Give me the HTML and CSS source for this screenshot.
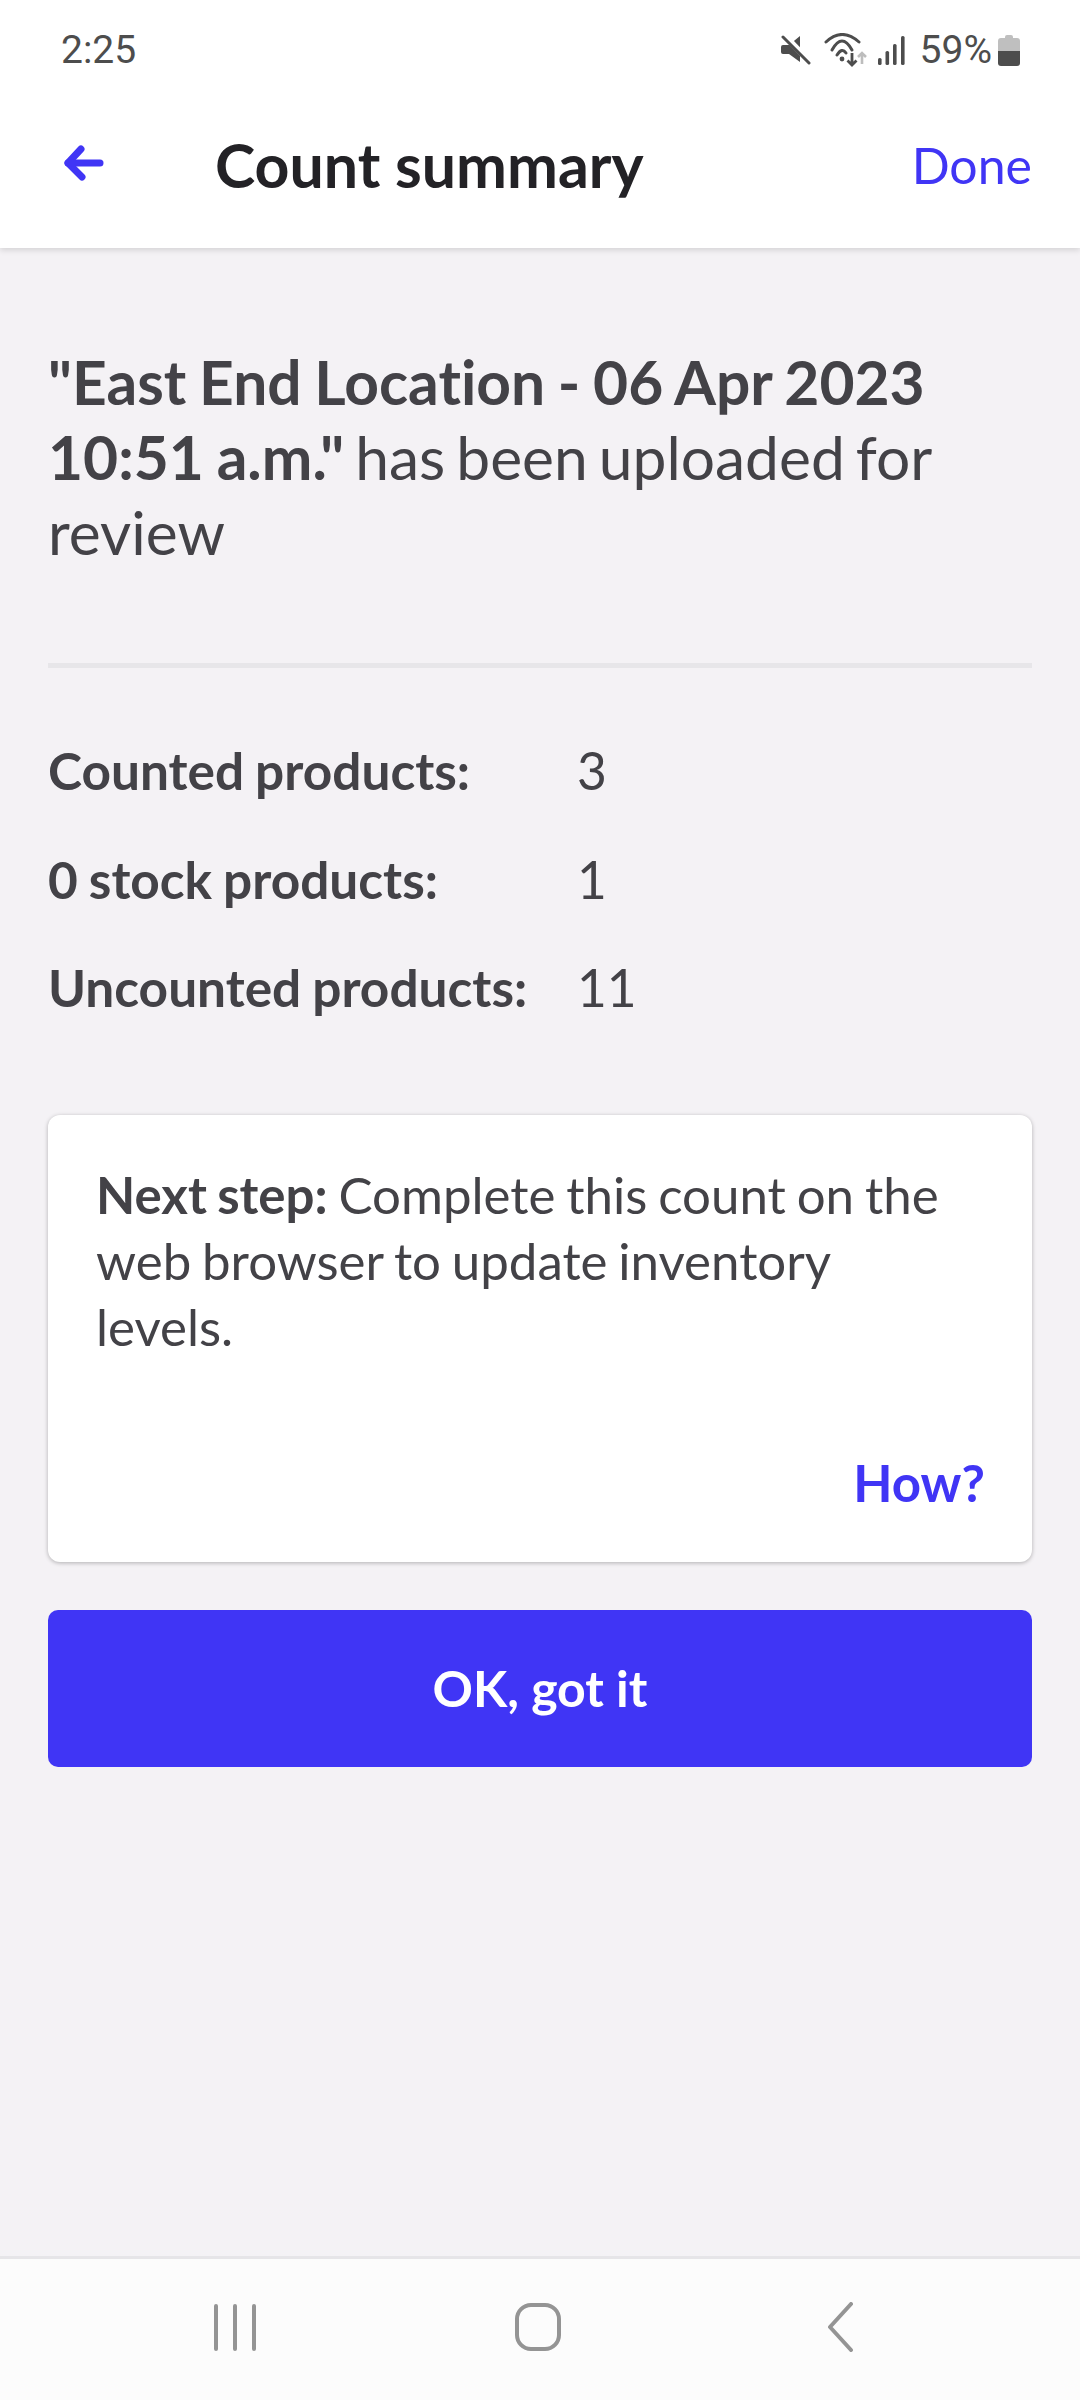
FILE: index.html
```html
<!DOCTYPE html>
<html lang="en">
<head>
<meta charset="utf-8">
<title>Count summary</title>
<link rel="stylesheet" href="styles.css">
</head>
<body>
<div class="screen">
  <header class="top">
    <div class="status">
      <span class="time">2:25</span>
      <div class="status-icons">
        <svg class="ic-mute" viewBox="0 0 30 30" width="30" height="30"><path d="M0 12q0-2 2-2h6L19 1v26l-11-8H2q-2 0-2-2z" fill="#4d4d4d"/><path d="M4 1l27 28" stroke="#fff" stroke-width="6"/><path d="M2 2l26 26" stroke="#4d4d4d" stroke-width="3" stroke-linecap="round"/></svg>
        <svg class="ic-wifi" viewBox="0 0 44 34" width="44" height="34"><g fill="none" stroke="#4d4d4d" stroke-width="3" stroke-linecap="round"><path d="M2 9Q18-6 35 9"/><path d="M8 17Q18-1 28 17"/><path d="M13 22Q18 14 22 20"/></g><circle cx="18" cy="26" r="2.4" fill="#4d4d4d"/><path d="M28 20v12M23.500 27.500l4.500 4.500 4.500-4.500" fill="none" stroke="#4d4d4d" stroke-width="2.8"/><path d="M38 31V20M34 24l4-4 4 4" fill="none" stroke="#bdbdbd" stroke-width="2.6"/></svg>
        <svg class="ic-signal" viewBox="0 0 27 29" width="27" height="29"><g fill="#4d4d4d"><rect x="0" y="22" width="3.6" height="7" rx="1.6"/><rect x="7.500" y="15" width="3.6" height="14" rx="1.6"/><rect x="15" y="8" width="3.6" height="21" rx="1.6"/><rect x="23" y="0" width="3.6" height="29" rx="1.6"/></g></svg>
        <span class="pct">59%</span>
        <svg class="ic-batt" viewBox="0 0 22 32" width="22" height="32"><path d="M7 3q0-2 2-2h4q2 0 2 2v1h4q3 0 3 3v10H0V7q0-3 3-3h4z" fill="#bfbfbf"/><path d="M0 17h22v12q0 3-3 3H3q-3 0-3-3z" fill="#4d4d4d"/></svg>
      </div>
    </div>
    <div class="appbar">
      <svg class="back" viewBox="0 0 42 40" width="42" height="40"><path d="M19 6L6 20l14 14" fill="none" stroke="#4035f5" stroke-width="7" stroke-linecap="round" stroke-linejoin="round"/><path d="M6 20h32" stroke="#4035f5" stroke-width="7" stroke-linecap="round"/></svg>
      <h1 class="title">Count summary</h1>
      <a class="done">Done</a>
    </div>
  </header>
  <main class="content">
    <p class="headline"><b>"East End Location - 06 Apr 2023 10:51 a.m."</b> has been uploaded for review</p>
    <hr class="rule">
    <dl class="stats">
      <div class="stat"><dt>Counted products:</dt><dd>3</dd></div>
      <div class="stat"><dt>0 stock products:</dt><dd>1</dd></div>
      <div class="stat"><dt>Uncounted products:</dt><dd>11</dd></div>
    </dl>
    <section class="card">
      <p class="card-text"><b>Next step:</b> Complete this count on the web browser to update inventory levels.</p>
      <a class="how">How?</a>
    </section>
    <button class="ok">OK, got it</button>
  </main>
  <nav class="navbar">
    <svg viewBox="0 0 46 48" width="46" height="48"><g stroke="#949494" stroke-width="4" stroke-linecap="round"><path d="M4 3v43M23 3v43M42 3v43"/></g></svg>
    <svg viewBox="0 0 48 50" width="48" height="50"><rect x="3" y="3" width="42" height="44" rx="14" fill="none" stroke="#949494" stroke-width="4"/></svg>
    <svg viewBox="0 0 28 50" width="28" height="50"><path d="M25 2L4 25l21 23" fill="none" stroke="#949494" stroke-width="4" stroke-linecap="round" stroke-linejoin="round"/></svg>
  </nav>
</div>
</body>
</html>
```
FILE: styles.css
```css
* { box-sizing: border-box; }
html, body { margin: 0; padding: 0; }
body { font-family: Lato, sans-serif; color: #434247; font-variant-ligatures: none; }
.screen { width: 1080px; height: 2400px; display: flex; flex-direction: column; background: #f4f2f5; }
.top { height: 248px; background: #fff; box-shadow: 0 2px 6px rgba(0,0,0,.14); position: relative; }
.status { height: 100px; display: flex; align-items: center; justify-content: space-between; padding: 0 60px 0 61px; font-family: Roboto, sans-serif; color: #4d4d4d; }
.time { font-size: 39px; }
.status-icons { display: flex; align-items: center; }
.ic-mute { margin-right: 13px; }
.ic-wifi { margin-right: 10px; }
.ic-signal { margin-right: 15px; }
.pct { font-size: 39px; margin-right: 6px; }
.appbar { height: 130px; display: flex; align-items: center; padding: 0 48px 0 62px; }
.back { flex: none; margin-top: -4px; }
.title { margin: -1px 0 0 111px; font-size: 60.8px; line-height: 70px; font-weight: 700; color: #232226; flex: 1; }
.done { font-size: 50px; color: #4035f5; }
.content { flex: 1; padding: 0 48px; display: flex; flex-direction: column; }
.headline { margin: 96px 0 0; font-size: 60.5px; line-height: 75px; word-spacing: -4.5px; }
.headline b { word-spacing: -2px; }
.rule { margin: 94px 0 0; border: 0; height: 5px; background: #e7e6e9; }
.stats { margin: 48px 0 0; }
.stat { display: flex; height: 108.5px; align-items: center; font-size: 51.4px; word-spacing: -1.5px; }
.stat dt { width: 529px; font-weight: 700; }
.stat dd { margin: 0; }
.card { margin-top: 73px; height: 447px; background: #fff; border-radius: 12px; box-shadow: 0 1px 4px rgba(0,0,0,.28); padding: 47px 47px 49px 48px; display: flex; flex-direction: column; }
.card-text { margin: 0; padding-right: 9px; font-size: 51px; line-height: 66px; word-spacing: -2.2px; }
.how { margin-top: auto; align-self: flex-end; font-size: 51px; font-weight: 700; color: #4035f5; }
.ok { margin-top: 48px; height: 157px; border: 0; border-radius: 10px; background: #4035f5; color: #fff; font-family: Lato, sans-serif; font-weight: 700; font-size: 50px; }
.navbar { height: 144px; background: #fcfcfc; border-top: 3px solid #e6e5e8; display: flex; align-items: center; padding: 0 0 6px 212px; }
.navbar svg:nth-child(1) { margin-right: 255.5px; }
.navbar svg:nth-child(2) { margin-right: 264px; }
```
